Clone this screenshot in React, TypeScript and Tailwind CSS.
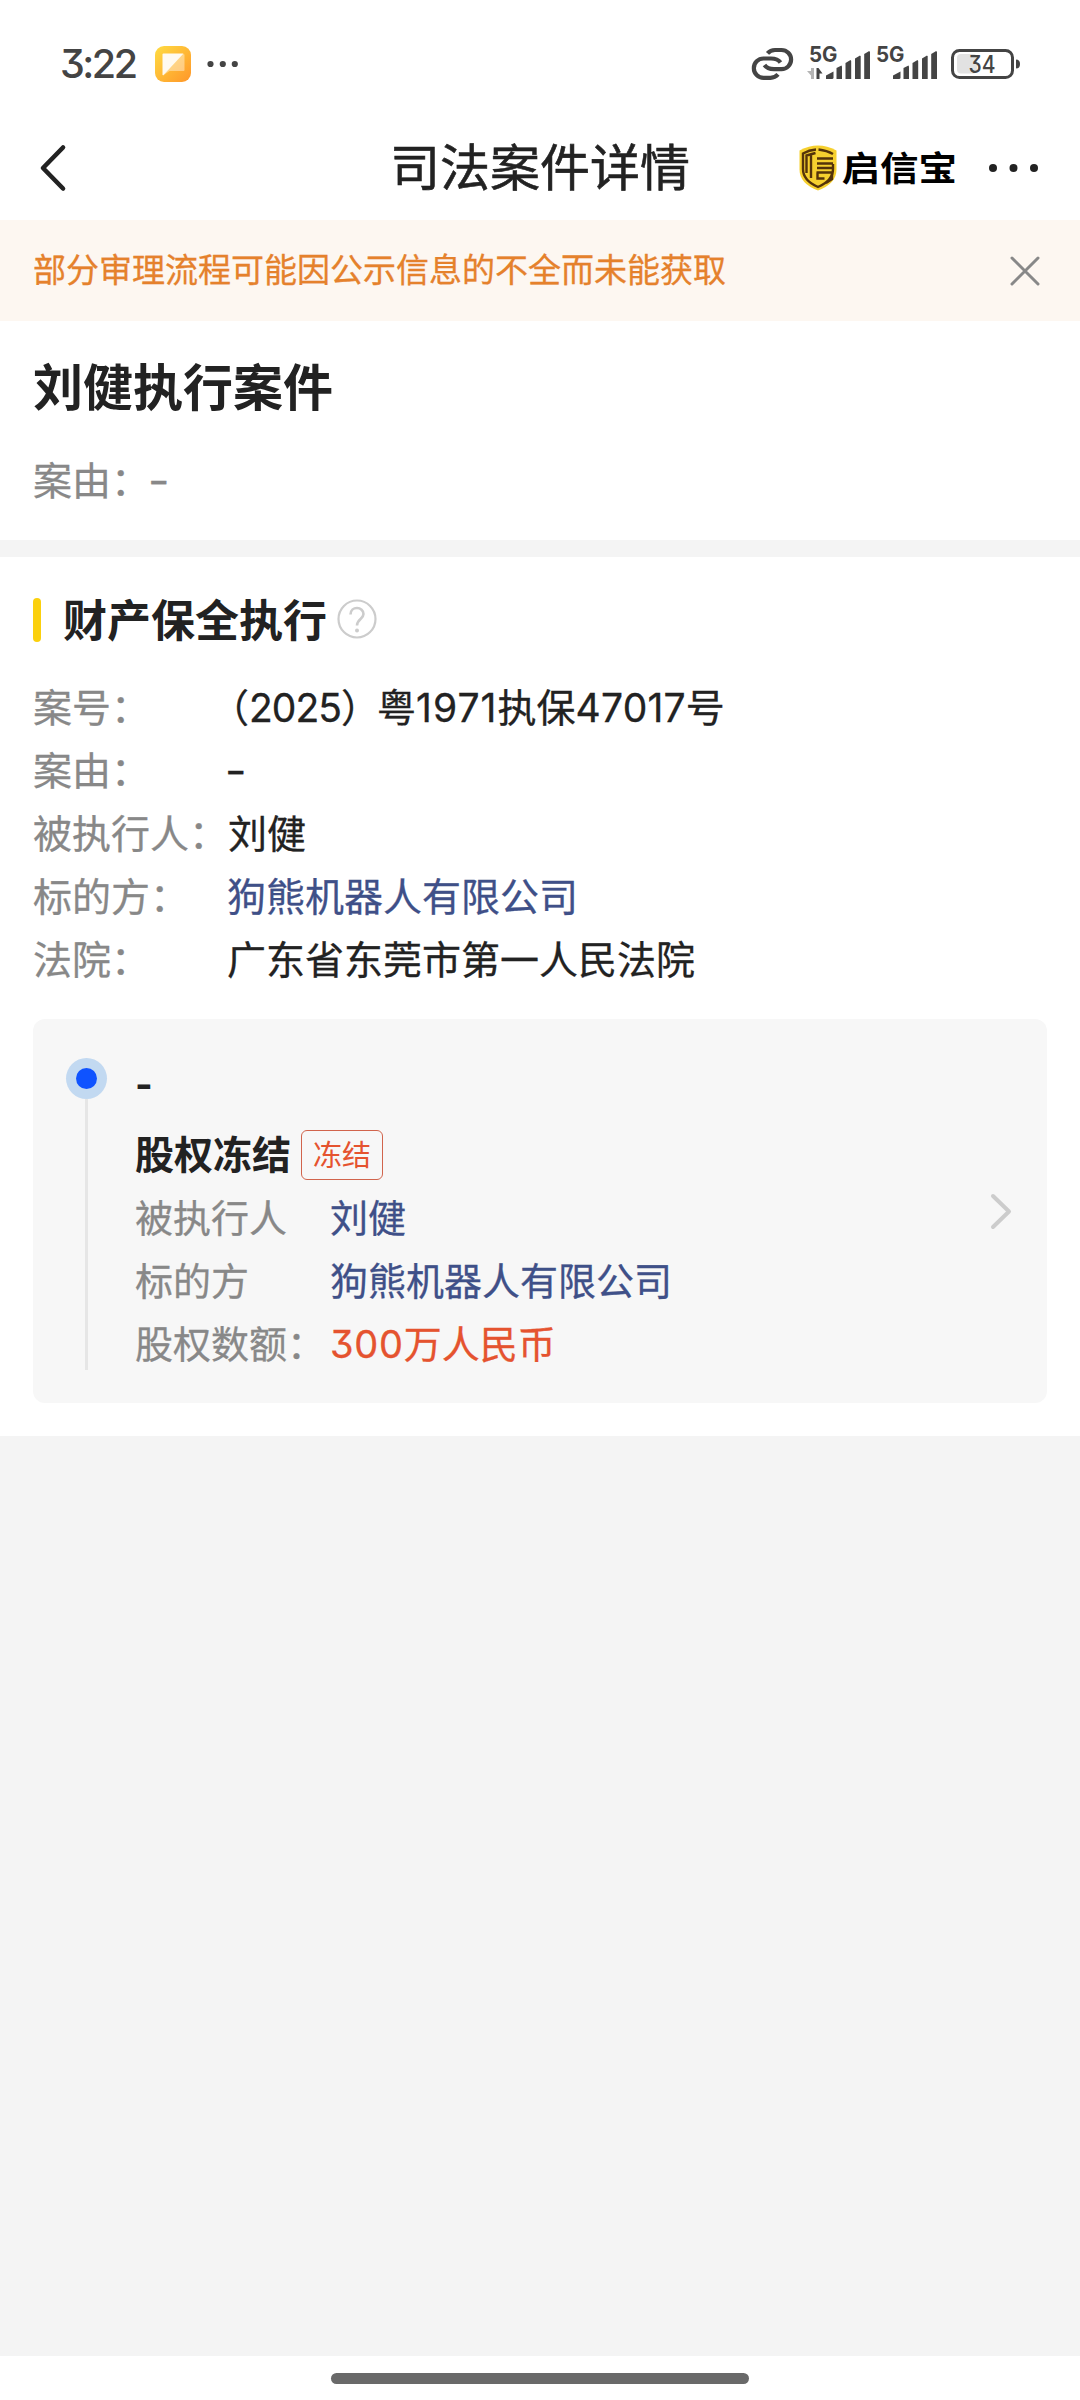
import React from 'react';

interface InfoItem {
  label: string;
  value: React.ReactNode;
  tone?: 'link' | 'danger';
}

const Num: React.FC<{ children: React.ReactNode; className?: string }> = ({ children, className = '' }) => (
  <span className={`font-[Inter,sans-serif] leading-none [font-feature-settings:'cv09'] ${className}`}>{children}</span>
);

const Dash: React.FC = () => <Num className="-ml-0.5 inline-block origin-left scale-x-[1.2]">-</Num>;

const caseInfo: InfoItem[] = [
  {
    label: '案号：',
    value: (
      <>
        <span className="ml-[-17px]">（</span>
        <Num className="tracking-[-1px]">2025</Num>
        <span className="mr-[-3px]">）</span>粤<Num className="tracking-[1.1px]">1971</Num>执保
        <Num className="tracking-[0.2px]">47017</Num>号
      </>
    ),
  },
  { label: '案由：', value: <Dash /> },
  { label: '被执行人：', value: '刘健' },
  { label: '标的方：', value: '狗熊机器人有限公司', tone: 'link' },
  { label: '法院：', value: '广东省东莞市第一人民法院' },
];

const freezeInfo: InfoItem[] = [
  { label: '被执行人', value: '刘健', tone: 'link' },
  { label: '标的方', value: '狗熊机器人有限公司', tone: 'link' },
  { label: '股权数额：', value: <><Num className="tracking-[0.7px]">300</Num>万人民币</>, tone: 'danger' },
];

const toneClass = {
  link: 'text-[#3f5088]',
  danger: 'text-[#e5532f]',
};

const Signal: React.FC<{ data?: boolean }> = ({ data }) => (
  <svg className="h-[56px] w-[67px] shrink-0" viewBox="806 36 67 56" fill="#444">
    <text x="809" y="62" fontSize="21.500" fontWeight="700" fontFamily="Inter, sans-serif" textLength="28.500" lengthAdjust="spacingAndGlyphs">5G</text>
    {data && (
      <>
        <path d="M811 68h3v11h-3v-3.500l-4-4.500h4z" fill="#b5b5b5" />
        <path d="M816.500 79v-11h2l4 5.500h-3v5.500z" />
      </>
    )}
    <path d="M826 79v-3.500l7.500-4v6a1.500 1.500 0 0 1-1.500 1.500z" />
    <path d="M836.500 79v-11l5-2.500.5 1v12.500z" />
    <path d="M845.500 79v-16l5-3 .7 1v18z" />
    <path d="M855 79v-20.500l5-3 .7 1v22.500z" />
    <path d="M864.200 79v-25l5-3 .8 1v27z" />
  </svg>
);

const StatusBar: React.FC = () => (
  <div className="flex h-[116px] items-start justify-between pt-11 pr-[58px] pl-[60px]">
    <div className="flex h-10 items-center">
      <span className="w-[94px] font-[Inter,sans-serif] text-[39.500px] leading-10 font-medium tracking-[-2.500px] text-[#444] [font-feature-settings:'cv09']">
        3:22
      </span>
      <svg className="h-[38px] w-[38px]" viewBox="0 0 38 38">
        <defs>
          <linearGradient id="note" x1="0" y1="0" x2="1" y2="1">
            <stop offset="0" stopColor="#ffdc42" />
            <stop offset="1" stopColor="#ff9629" />
          </linearGradient>
        </defs>
        <rect x="1" y="1" width="36" height="36" rx="9" fill="url(#note)" />
        <path d="M9.500 9h20q1 0 1 1v15q0 1-1 1h-14l-6.500 4.500V9.500z" fill="#fff" fillOpacity=".4" />
        <path d="M8.500 9.500q0-1 1-1h20L9.300 30.300l-.8-.3z" fill="#fffaf0" />
      </svg>
      <svg className="ml-[14px] h-2 w-8" viewBox="0 0 32 8" fill="#444">
        <circle cx="4.500" cy="4" r="3.100" />
        <circle cx="16.800" cy="4" r="3.100" />
        <circle cx="28.800" cy="4" r="3.100" />
      </svg>
    </div>
    <div className="flex h-10 items-center">
      <svg className="mr-[11px] h-10 w-[45px]" viewBox="750 44 45 40" fill="none" stroke="#444" strokeWidth="4.200">
        <path d="M780.500 62.500C778 59 774.500 58.500 771 58.500h-7.500a9.600 9.600 0 0 0 0 19.300h7q4.500 0 7.500-3.400" />
        <path d="M764.500 65c2.500 3.700 6 4.200 9.500 4.200h7.500a9.600 9.600 0 0 0 0-19.200h-6.500q-4.500 0-7.500 3.400" />
      </svg>
      <Signal data />
      <Signal />
      <svg className="ml-[9px] h-10 w-[73px]" viewBox="949 44 73 40">
        <rect x="957" y="54" width="20" height="19.500" rx="4" fill="#e2e2e2" />
        <rect x="952.500" y="50.500" width="60" height="27" rx="7" fill="none" stroke="#444" strokeWidth="3" />
        <path d="M1016 59.500q4 0 4 4.500t-4 4.500z" fill="#444" />
        <text x="968.500" y="73" fontSize="24" fontWeight="500" fill="#444" className="font-[Inter,sans-serif] [font-feature-settings:'cv09']" textLength="27" lengthAdjust="spacingAndGlyphs">34</text>
      </svg>
    </div>
  </div>
);

const ShieldLogo: React.FC = () => (
  <svg className="h-[46px] w-[40px]" viewBox="0 0 40 46">
    <path d="M20 .5q9 0 18.500 5v19q0 14-18.500 21Q1.500 38.500 1.500 24.500v-19q9.500-5 18.500-5z" fill="#f6d02f" />
    <g fill="none" stroke="#54330a" strokeWidth="2.400">
      <path d="M18 4.500Q11 5 5 8.500V24q0 11.500 15 18 15-6.500 15-18v-5" />
      <path d="M20.500 4.500Q29 5.500 35 9M13 9v24M8.500 28V10.500l9-2.500" />
      <path d="M19 13.500h16M19 18.500h16M19 23h16M18.500 27.500H35M19.500 27.500v6h7M34 28v6l-6 4" />
    </g>
  </svg>
);

const NavBar: React.FC = () => (
  <header className="grid h-[104px] grid-cols-[1fr_auto_1fr] items-center">
    <svg className="ml-[38px] h-12 w-8" viewBox="0 0 32 48" fill="none" stroke="#222" strokeWidth="4.600" strokeLinecap="round" strokeLinejoin="round">
      <path d="M25 3.500 5 24l20 20.500" />
    </svg>
    <h1 className="mb-2 text-[50px] leading-[72px] text-[#222] [-webkit-text-stroke:0.6px]">司法案件详情</h1>
    <div className="flex items-center justify-end pr-10">
      <ShieldLogo />
      <span className="mb-[5px] ml-[3px] origin-center scale-y-90 text-[38.500px] leading-[46px] font-bold text-black">启信宝</span>
      <svg className="ml-[31px] h-3 w-[52px]" viewBox="0 0 52 12" fill="#222">
        <circle cx="5" cy="6" r="4" />
        <circle cx="25.500" cy="6" r="4" />
        <circle cx="46" cy="6" r="4" />
      </svg>
    </div>
  </header>
);

const App: React.FC = () => {
  return (
    <div className="flex h-[2400px] w-[1080px] flex-col overflow-hidden bg-[#f4f4f4] font-['Noto_Sans_CJK_SC',sans-serif]">
      <div className="bg-white">
        <StatusBar />
        <NavBar />
      </div>

      {/* Notice */}
      <div className="flex h-[101px] items-center justify-between bg-[#fdf7f1] pr-[39px] pl-[33px]">
        <p className="mb-[5px] text-[33px] leading-[48px] text-[#e5812c] [-webkit-text-stroke:0.3px]">
          部分审理流程可能因公示信息的不全而未能获取
        </p>
        <svg className="h-8 w-8" viewBox="0 0 32 32" fill="none" stroke="#888" strokeWidth="3" strokeLinecap="round">
          <path d="M3 3l26 26M29 3 3 29" />
        </svg>
      </div>

      {/* Case title */}
      <section className="h-[219px] bg-white px-[33px] pt-[26px]">
        <h2 className="text-[50px] leading-[74px] font-bold text-[#222]">刘健执行案件</h2>
        <p className="mt-[26px] text-[39px] leading-[63px] text-[#888] [-webkit-text-stroke:0.3px]">
          案由：<Dash />
        </p>
      </section>

      <section className="mt-[17px] h-[879px] bg-white px-[33px] pt-[29px]">
        <div className="flex h-[64px] items-center">
          <span className="mt-[3px] h-[44px] w-2 rounded-full bg-[#fbd00d]" />
          <h3 className="ml-[22px] pb-px text-[44px] leading-[64px] font-bold text-[#222]">财产保全执行</h3>
          <svg className="mt-[2px] ml-[10px] h-10 w-10" viewBox="0 0 40 40" fill="none" stroke="#ccc" strokeWidth="2.200">
            <circle cx="20" cy="20" r="18.500" />
            <path d="M13.500 15.500c0-4 3-6.500 6.500-6.500s6.500 2.500 6.500 6c0 5-6.500 5-6.500 11.500" strokeWidth="2.600" />
            <circle cx="20" cy="31.500" r="2" fill="#ccc" stroke="none" />
          </svg>
        </div>

        <dl className="mt-[24px] text-[39px] leading-[63px] [-webkit-text-stroke:0.3px]">
          {caseInfo.map((item, idx) => (
            <div key={idx} className="flex h-[63px] whitespace-nowrap">
              <dt className="min-w-[194px] text-[#888]">{item.label}</dt>
              <dd className={item.tone ? toneClass[item.tone] : 'text-[#222]'}>{item.value}</dd>
            </div>
          ))}
        </dl>

        {/* Timeline card */}
        <div className="mt-[30px] flex h-[384px] rounded-xl bg-[#f7f7f7] pr-[35px] pl-[33px]">
          <div className="flex w-[41px] flex-col items-center pt-[39px]">
            <div className="flex h-[41px] w-[41px] items-center justify-center rounded-full bg-[#c2d9f1]">
              <div className="h-[21px] w-[21px] rounded-full bg-[#0f53ff]" />
            </div>
            <div className="h-[271px] w-[3px] bg-[#e6e6e6]" />
          </div>
          <div className="ml-[28px] flex-1 pt-[31px] text-[38px] leading-[63px]">
            <div className="h-[71px] font-bold text-[#222]"><Num>-</Num></div>
            <div className="flex h-[63px] items-center">
              <h4 className="text-[39px] font-bold text-[#222]">股权冻结</h4>
              <span className="mt-[5px] ml-[10px] flex h-[50px] w-[82px] items-center justify-center rounded-md border border-[#d1644c] pb-[3px] text-[29px] text-[#e5532f]">
                冻结
              </span>
            </div>
            <dl className="[-webkit-text-stroke:0.3px]">
              {freezeInfo.map((item, idx) => (
                <div key={idx} className="flex h-[63px] whitespace-nowrap">
                  <dt className="min-w-[195px] text-[#888]">{item.label}</dt>
                  <dd className={item.tone ? toneClass[item.tone] : 'text-[#222]'}>{item.value}</dd>
                </div>
              ))}
            </dl>
          </div>
          <svg className="h-10 w-6 self-center" viewBox="0 0 24 40" fill="none" stroke="#ccc" strokeWidth="4" strokeLinecap="round" strokeLinejoin="round">
            <path d="M5 5l16 15.500L5 36" />
          </svg>
        </div>
      </section>

      {/* Gesture bar */}
      <div className="mt-auto flex h-[44px] justify-center bg-white pt-[17px]">
        <div className="h-[11px] w-[418px] rounded-full bg-[#696969]" />
      </div>
    </div>
  );
};

export default App;
